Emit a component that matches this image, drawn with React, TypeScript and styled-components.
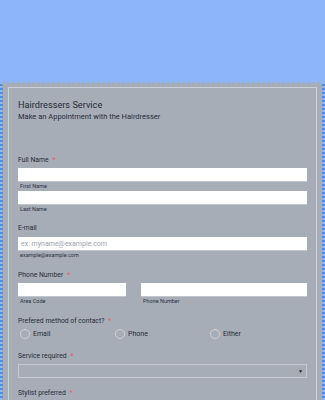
import React from "react";
import styled, { createGlobalStyle } from "styled-components";

const Global = createGlobalStyle`
  html, body { margin: 0; padding: 0; background: #8db5f9; }
  body { font-family: Roboto, "Liberation Sans", Arial, sans-serif; color: #2c3345; }
`;

const Page = styled.div`
  width: 325px;
  height: 400px;
  overflow: hidden;
  background: #8db5f9;
  padding-top: 84px;
  box-sizing: border-box;
`;

const Sheet = styled.div`
  position: relative;
  margin: 0 2px;
  background: #a7adb6;
  padding: 3px 6px 0;
  height: 400px;
  box-sizing: border-box;
  &::before, &::after {
    content: "";
    position: absolute;
    top: 0;
    bottom: 0;
    width: 3px;
    background: repeating-linear-gradient(180deg, #4a8fe6 0 2px, transparent 2px 4px);
  }
  &::before { left: -2px; }
  &::after { right: -2px; }
`;

const Wave = styled.div`
  position: absolute;
  top: -2px;
  left: 0;
  right: 0;
  height: 3px;
  background: repeating-linear-gradient(90deg, #a7adb6 0 3px, transparent 3px 5px);
`;

const Card = styled.div`
  border: 1px solid #cdd1d7;
  border-bottom: none;
  padding: 11px 9px 0;
  height: 100%;
  box-sizing: border-box;
`;

const Title = styled.div`
  font-size: 9.2px;
  line-height: 12px;
  color: #262b38;
`;

const Subtitle = styled.div`
  font-size: 7.5px;
  line-height: 10px;
  color: #262b38;
  margin-top: 1px;
`;

const Field = styled.div<{ $top: number }>`
  margin-top: ${(p) => p.$top}px;
`;

const Label = styled.div<{ $gap?: number }>`
  font-size: 6.8px;
  line-height: 10px;
  color: #262b38;
  margin-bottom: ${(p) => (p.$gap ?? 3)}px;
`;

const Star = styled.span`
  color: #e05c5c;
  margin-left: 4px;
`;

const Input = styled.div`
  height: 14px;
  background: #fff;
  border-bottom: 1px solid #c2c6cc;
  box-sizing: border-box;
  font-size: 7px;
  line-height: 14px;
  padding-left: 3px;
  color: #9ba1ab;
`;

const Sub = styled.div`
  font-size: 5.5px;
  line-height: 8px;
  color: #2c3345;
  padding-left: 2px;
  margin-bottom: 1px;
`;

const Row = styled.div`
  display: grid;
  grid-template-columns: 108px 166px;
  column-gap: 15px;
`;

const Radios = styled.div`
  display: grid;
  grid-template-columns: 95px 95px 1fr;
  padding-left: 2px;
`;

const Radio = styled.div`
  display: flex;
  align-items: center;
  gap: 3px;
  font-size: 7px;
  line-height: 12px;
  color: #262b38;
`;

const Circle = styled.span`
  width: 8px;
  height: 8px;
  border-radius: 50%;
  border: 1px solid #cfd3d8;
  display: inline-block;
`;

const Select = styled.div`
  height: 14px;
  border: 1px solid #c6cad0;
  box-sizing: border-box;
  display: flex;
  justify-content: flex-end;
  align-items: center;
  padding-right: 3px;
  font-size: 5px;
  color: #222;
`;

export default function App() {
  return (
    <>
      <Global />
      <Page>
        <Sheet>
          <Wave />
          <Card>
            <Title>Hairdressers Service</Title>
            <Subtitle>Make an Appointment with the Hairdresser</Subtitle>

            <Field $top={33}>
              <Label>
                Full Name<Star>*</Star>
              </Label>
              <Input />
              <Sub>First Name</Sub>
              <Input />
              <Sub>Last Name</Sub>
            </Field>

            <Field $top={10}>
              <Label $gap={4}>E-mail</Label>
              <Input>ex: myname@example.com</Input>
              <Sub>example@example.com</Sub>
            </Field>

            <Field $top={11}>
              <Label>
                Phone Number<Star>*</Star>
              </Label>
              <Row>
                <div>
                  <Input />
                  <Sub>Area Code</Sub>
                </div>
                <div>
                  <Input />
                  <Sub>Phone Number</Sub>
                </div>
              </Row>
            </Field>

            <Field $top={10}>
              <Label $gap={2}>
                Prefered method of contact?<Star>*</Star>
              </Label>
              <Radios>
                <Radio>
                  <Circle />
                  Email
                </Radio>
                <Radio>
                  <Circle />
                  Phone
                </Radio>
                <Radio>
                  <Circle />
                  Either
                </Radio>
              </Radios>
            </Field>

            <Field $top={11}>
              <Label>
                Service required<Star>*</Star>
              </Label>
              <Select>▼</Select>
            </Field>

            <Field $top={10}>
              <Label>
                Stylist preferred<Star>*</Star>
              </Label>
            </Field>
          </Card>
        </Sheet>
      </Page>
    </>
  );
}
